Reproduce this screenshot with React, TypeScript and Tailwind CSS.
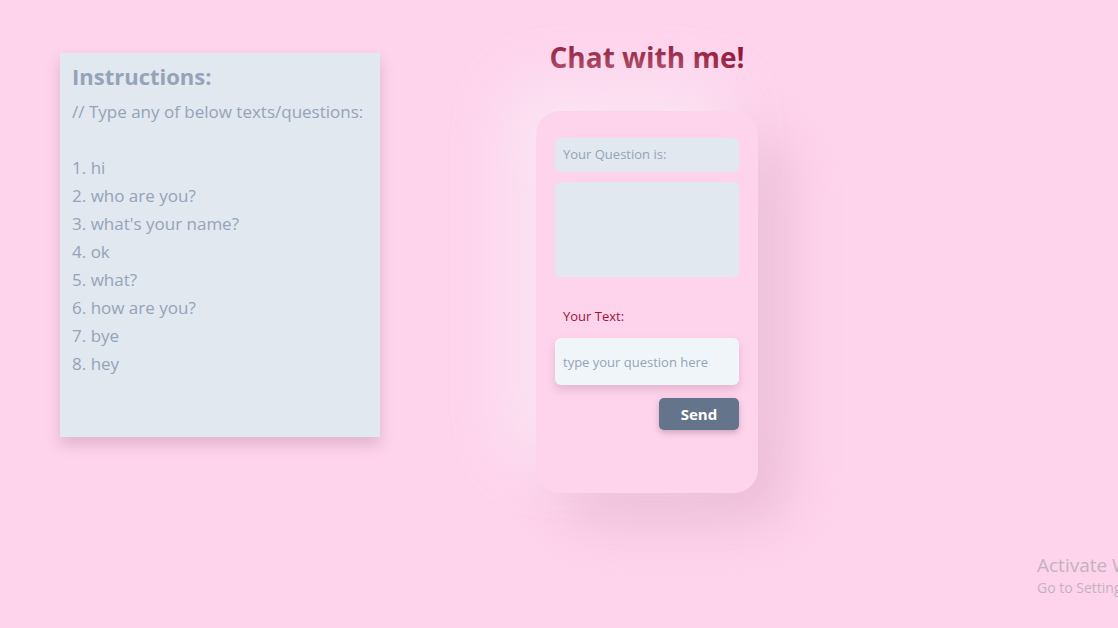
import { useState } from "react";

const ITEMS = [
  "hi",
  "who are you?",
  "what's your name?",
  "ok",
  "what?",
  "how are you?",
  "bye",
  "hey",
];

export default function App() {
  const [text, setText] = useState("");

  return (
    <div className="relative min-h-screen w-full overflow-hidden bg-[#fed4ec] font-['Open_Sans','Noto_Sans',sans-serif]">
      <div className="flex items-start">
        {/* instructions panel */}
        <div className="ml-[60px] mt-[53px] h-[384px] w-[320px] bg-[#e2e8f0] px-3 pt-[9px] text-[#94a3b8] shadow-[0_8px_14px_rgba(190,140,170,0.45)]">
          <h2 className="text-[22px] leading-[28px] font-bold">Instructions:</h2>
          <p className="mt-[8px] text-[17px] leading-[28px]">
            // Type any of below texts/questions:
          </p>
          <ol className="mt-[28px] text-[17px] leading-[28px]">
            {ITEMS.map((item, i) => (
              <li key={i}>
                {i + 1}. {item}
              </li>
            ))}
          </ol>
        </div>

        {/* chat column */}
        <div className="ml-[156px] flex w-[222px] flex-col items-center">
          <h1 className="mt-[39px] whitespace-nowrap text-[28px] leading-[36px] font-bold text-[#8e1234]">
            Chat with me!
          </h1>
          <div className="mt-[36px] flex h-[382px] w-[222px] flex-col rounded-[24px] bg-[#fed4ec] px-[19px] pt-[27px] shadow-[-30px_-30px_60px_rgba(250,232,246,0.85),28px_28px_56px_rgba(215,160,190,0.45)]">
            <div className="flex h-[34px] items-center rounded-[6px] bg-[#e2e8f0] px-2 text-[13px] text-[#94a3b8]">
              Your Question is:
            </div>
            <div className="mt-[10px] h-[95px] rounded-[6px] bg-[#e2e8f0]" />
            <label className="mt-[30px] px-2 text-[13px] leading-[18px] text-[#9f1239]">
              Your Text:
            </label>
            <input
              value={text}
              onChange={(e) => setText(e.target.value)}
              placeholder="type your question here"
              className="mt-[13px] h-[47px] w-full rounded-[6px] bg-[#f0f5fa] px-2 text-[13px] text-slate-600 placeholder:text-[#94a3b8] shadow-[0_5px_10px_rgba(180,130,160,0.35)] outline-none"
            />
            <div className="mt-[13px] flex justify-end">
              <button className="h-[32px] w-[80px] rounded-[5px] bg-[#64748b] text-[15px] font-bold text-white shadow-[0_3px_6px_rgba(120,90,110,0.35)]">
                Send
              </button>
            </div>
          </div>
        </div>
      </div>

      {/* windows watermark */}
      <div className="absolute left-[1037px] top-[553px] whitespace-nowrap text-[#c3b2bd]">
        <div className="text-[19px] leading-[25px]">Activate Windows</div>
        <div className="text-[14px] leading-[20px]">Go to Settings to activate Windows.</div>
      </div>
    </div>
  );
}
